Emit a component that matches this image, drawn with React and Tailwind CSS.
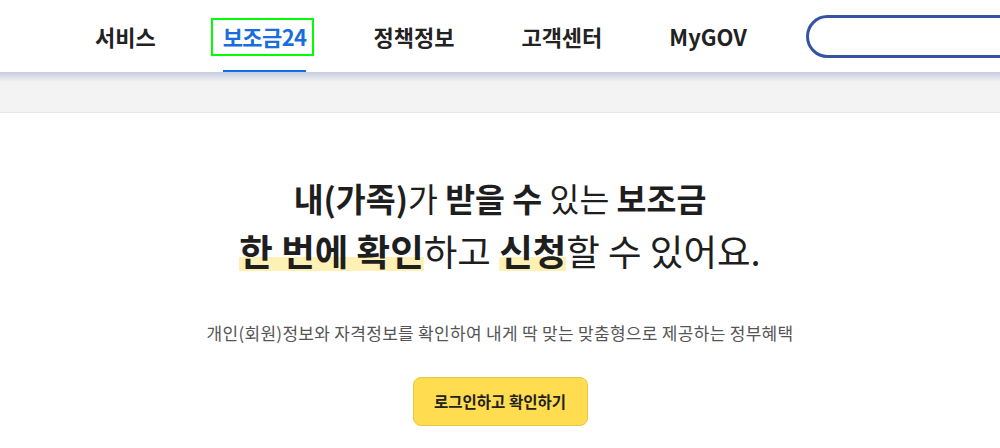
import React from 'react';

// ============================================================
// 상단 메뉴
// ============================================================

const menus = [
  { label: '서비스' },
  { label: '보조금24', active: true },
  { label: '정책정보' },
  { label: '고객센터' },
  { label: 'MyGOV' },
];

const Header = () => (
  <header className="relative z-10 h-[72px] bg-white overflow-hidden">
    <div className="flex items-center h-full pl-[95px] gap-[67px]">
      {menus.map((m) => (
        <div key={m.label} className="relative h-full flex items-center shrink-0">
          <span
            className={
              m.active
                ? 'relative text-[22px] font-bold text-[#1a6ddb] tracking-[-0.6px]'
                : 'text-[22px] font-bold text-[#222]'
            }
          >
            {m.label}
            {m.active && (
              <span className="absolute -left-[12px] -right-[8px] -top-[2px] -bottom-[3px] border-2 border-[#00ff00]"></span>
            )}
          </span>
          {m.active && (
            <span className="absolute left-0 right-0 bottom-[-3px] h-[5px] bg-[#0f6fe3]"></span>
          )}
        </div>
      ))}
      <div className="shrink-0 ml-[-8px] w-[260px] h-[43px] rounded-full border-[3px] border-[#3553a3] bg-white"></div>
    </div>
  </header>
);

// ============================================================
// 본문
// ============================================================

const Mark = ({ children }) => (
  <span className="font-bold bg-[linear-gradient(transparent_62%,#fff0b5_62%,#fff0b5_88%,transparent_88%)]">
    {children}
  </span>
);

function App() {
  return (
    <div
      className="w-[1000px] h-[448px] bg-white overflow-hidden"
      style={{ fontFamily: '"Noto Sans CJK KR", "Noto Sans", sans-serif' }}
    >
      <Header />
      <div className="relative h-[41px] bg-[#f4f3f4] border-b border-[#e6e5e7]">
        <div className="absolute inset-x-0 top-0 h-[10px] bg-gradient-to-b from-[#c6cddd] to-[#f4f3f4]"></div>
      </div>

      <main className="flex flex-col items-center pt-[58px]">
        <h1 className="text-center text-[#1e1e1e] font-normal">
          <div className="text-[32.5px] leading-[54px]">
            <span className="font-bold">내(가족)</span>가 <span className="font-bold">받을 수</span> 있는{' '}
            <span className="font-bold">보조금</span>
          </div>
          <div className="text-[36.5px] leading-[52px]">
            <Mark>한 번에 확인</Mark>하고 <Mark>신청</Mark>할 수 있어요.
          </div>
        </h1>

        <p className="mt-[44px] text-[17px] leading-[24px] text-[#555] tracking-[0.3px]">
          개인(회원)정보와 자격정보를 확인하여 내게 딱 맞는 맞춤형으로 제공하는 정부혜택
        </p>

        <button className="mt-[32px] w-[175px] h-[49px] rounded-[8px] bg-[#ffdc50] border border-[#e9c73d] text-[15.5px] font-bold text-[#222]">
          로그인하고 확인하기
        </button>
      </main>
    </div>
  );
}

export default App;
